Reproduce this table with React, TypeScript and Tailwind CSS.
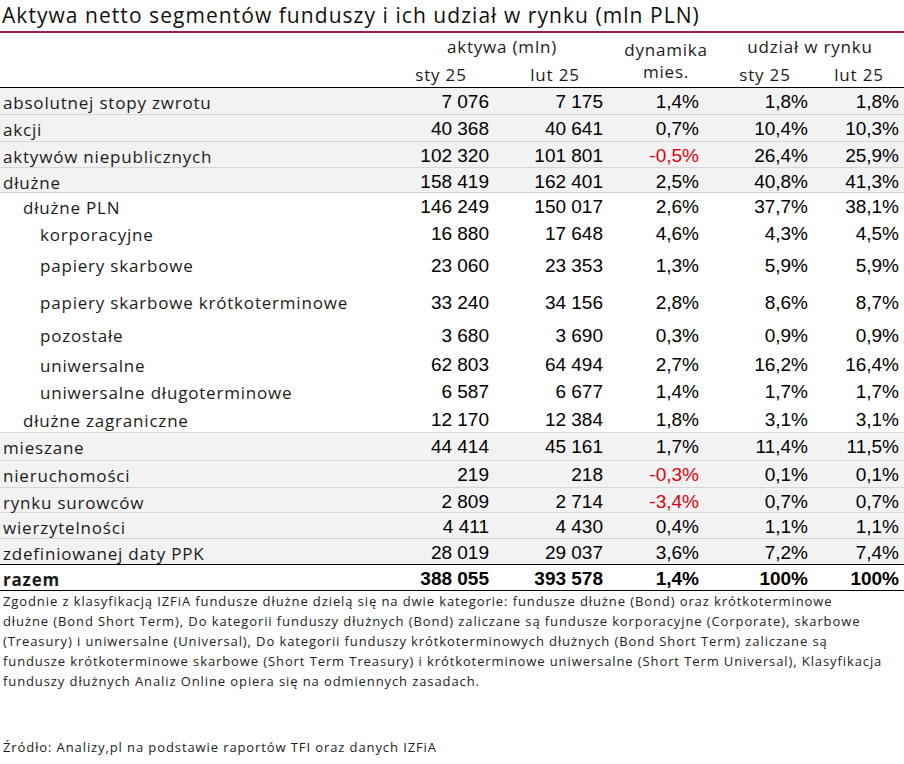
const grid = 'grid grid-cols-[388px_106px_122px_100px_98px_90px] items-center';
const font = "font-['Open_Sans','Noto_Sans',sans-serif]";
const label = `${font} text-[17px] tracking-[0.8px] text-[#1b1b1b] whitespace-nowrap`;
const num = "font-['Liberation_Sans',Arial,sans-serif] text-[19px] text-right whitespace-nowrap";

type Row = {
  name: string;
  v: [string, string, string, string, string];
  h: string;
  indent?: 0 | 1 | 2;
  gray?: boolean;
  border?: 'gray' | 'black' | 'none';
};

const rows: Row[] = [
  { name: 'absolutnej stopy zwrotu', v: ['7 076', '7 175', '1,4%', '1,8%', '1,8%'], h: 'h-[27px]', gray: true, border: 'gray' },
  { name: 'akcji', v: ['40 368', '40 641', '0,7%', '10,4%', '10,3%'], h: 'h-[27px]', gray: true, border: 'gray' },
  { name: 'aktywów niepublicznych', v: ['102 320', '101 801', '-0,5%', '26,4%', '25,9%'], h: 'h-[26px]', gray: true, border: 'gray' },
  { name: 'dłużne', v: ['158 419', '162 401', '2,5%', '40,8%', '41,3%'], h: 'h-[25px]', gray: true, border: 'gray' },
  { name: 'dłużne PLN', v: ['146 249', '150 017', '2,6%', '37,7%', '38,1%'], h: 'h-[27px]', indent: 1 },
  { name: 'korporacyjne', v: ['16 880', '17 648', '4,6%', '4,3%', '4,5%'], h: 'h-[27px]', indent: 2 },
  { name: 'papiery skarbowe', v: ['23 060', '23 353', '1,3%', '5,9%', '5,9%'], h: 'h-[38px]', indent: 2 },
  { name: 'papiery skarbowe krótkoterminowe', v: ['33 240', '34 156', '2,8%', '8,6%', '8,7%'], h: 'h-[36px]', indent: 2 },
  { name: 'pozostałe', v: ['3 680', '3 690', '0,3%', '0,9%', '0,9%'], h: 'h-[30px]', indent: 2 },
  { name: 'uniwersalne', v: ['62 803', '64 494', '2,7%', '16,2%', '16,4%'], h: 'h-[27px]', indent: 2 },
  { name: 'uniwersalne długoterminowe', v: ['6 587', '6 677', '1,4%', '1,7%', '1,7%'], h: 'h-[28px]', indent: 2 },
  { name: 'dłużne zagraniczne', v: ['12 170', '12 384', '1,8%', '3,1%', '3,1%'], h: 'h-[27px]', indent: 1, border: 'gray' },
  { name: 'mieszane', v: ['44 414', '45 161', '1,7%', '11,4%', '11,5%'], h: 'h-[28px]', gray: true, border: 'gray' },
  { name: 'nieruchomości', v: ['219', '218', '-0,3%', '0,1%', '0,1%'], h: 'h-[27px]', gray: true, border: 'gray' },
  { name: 'rynku surowców', v: ['2 809', '2 714', '-3,4%', '0,7%', '0,7%'], h: 'h-[25px]', gray: true, border: 'gray' },
  { name: 'wierzytelności', v: ['4 411', '4 430', '0,4%', '1,1%', '1,1%'], h: 'h-[26px]', gray: true, border: 'gray' },
  { name: 'zdefiniowanej daty PPK', v: ['28 019', '29 037', '3,6%', '7,2%', '7,4%'], h: 'h-[26px]', gray: true, border: 'black' },
];

const pads = ['pr-[5px]', 'pr-[13px]', 'pr-[17px]', 'pr-[6px]', 'pr-[5px]'];

const indents = ['pl-[3px]', 'pl-[23px]', 'pl-[40px]'];

const borders = {
  gray: 'border-b border-[#d6d6d6]',
  black: 'border-b border-black',
  none: '',
};

const notes = [
  'Zgodnie z klasyfikacją IZFiA fundusze dłużne dzielą się na dwie kategorie: fundusze dłużne (Bond) oraz krótkoterminowe',
  'dłużne (Bond Short Term), Do kategorii funduszy dłużnych (Bond) zaliczane są fundusze korporacyjne (Corporate), skarbowe',
  '(Treasury) i uniwersalne (Universal), Do kategorii funduszy krótkoterminowych dłużnych (Bond Short Term) zaliczane są',
  'fundusze krótkoterminowe skarbowe (Short Term Treasury) i krótkoterminowe uniwersalne (Short Term Universal), Klasyfikacja',
  'funduszy dłużnych Analiz Online opiera się na odmiennych zasadach.',
];

export default function App() {
  return (
    <div className="w-[904px] h-[764px] bg-white overflow-hidden">
      {/* title */}
      <div className="h-[33px] border-b-2 border-[#9c1f5b] pl-[2px]">
        <h1 className={`${font} text-[21px] tracking-[1.05px] leading-[31px] text-[#111] whitespace-nowrap`}>
          Aktywa netto segmentów funduszy i ich udział w rynku (mln PLN)
        </h1>
      </div>

      {/* header */}
      <div className={`${grid} grid-rows-[27px_27px] h-[55px] border-b border-black ${label} text-center`}>
        <div className="row-span-2" />
        <div className="col-span-2 self-end pb-[1px]">aktywa (mln)</div>
        <div className="row-span-2 flex flex-col items-center leading-[22px] pt-[1px]">
          <span>dynamika</span>
          <span>mies.</span>
        </div>
        <div className="col-span-2 self-end pb-[1px]">udział w rynku</div>
        <div className="self-center pt-[3px]">sty 25</div>
        <div className="self-center pt-[3px]">lut 25</div>
        <div className="self-center pt-[3px]">sty 25</div>
        <div className="self-center pt-[3px]">lut 25</div>
      </div>

      {rows.map((r) => (
        <div
          key={r.name}
          className={`${grid} ${r.h} ${r.gray ? 'bg-[#f2f2f2]' : 'bg-white'} ${borders[r.border ?? 'none']}`}
        >
          <div className={`${label} ${indents[r.indent ?? 0]}`}>{r.name}</div>
          {r.v.map((x, i) => (
            <div key={i} className={`${num} ${pads[i]} ${x.startsWith('-') ? 'text-[#e3000f]' : 'text-black'}`}>
              {x}
            </div>
          ))}
        </div>
      ))}

      {/* total */}
      <div className={`${grid} h-[26px] border-b border-black`}>
        <div className={`${label} pl-[3px] font-bold`}>razem</div>
        {['388 055', '393 578', '1,4%', '100%', '100%'].map((x, i) => (
          <div key={i} className={`${num} ${pads[i]} text-black font-bold`}>
            {x}
          </div>
        ))}
      </div>

      {/* notes */}
      <div className={`pl-[3px] ${font} text-[13px] tracking-[0.9px] leading-[20px] text-[#222]`}>
        {notes.map((n) => (
          <div key={n} className="whitespace-nowrap">{n}</div>
        ))}
        <div className="mt-[46px] whitespace-nowrap">Źródło: Analizy,pl na podstawie raportów TFI oraz danych IZFiA</div>
      </div>
    </div>
  );
}
